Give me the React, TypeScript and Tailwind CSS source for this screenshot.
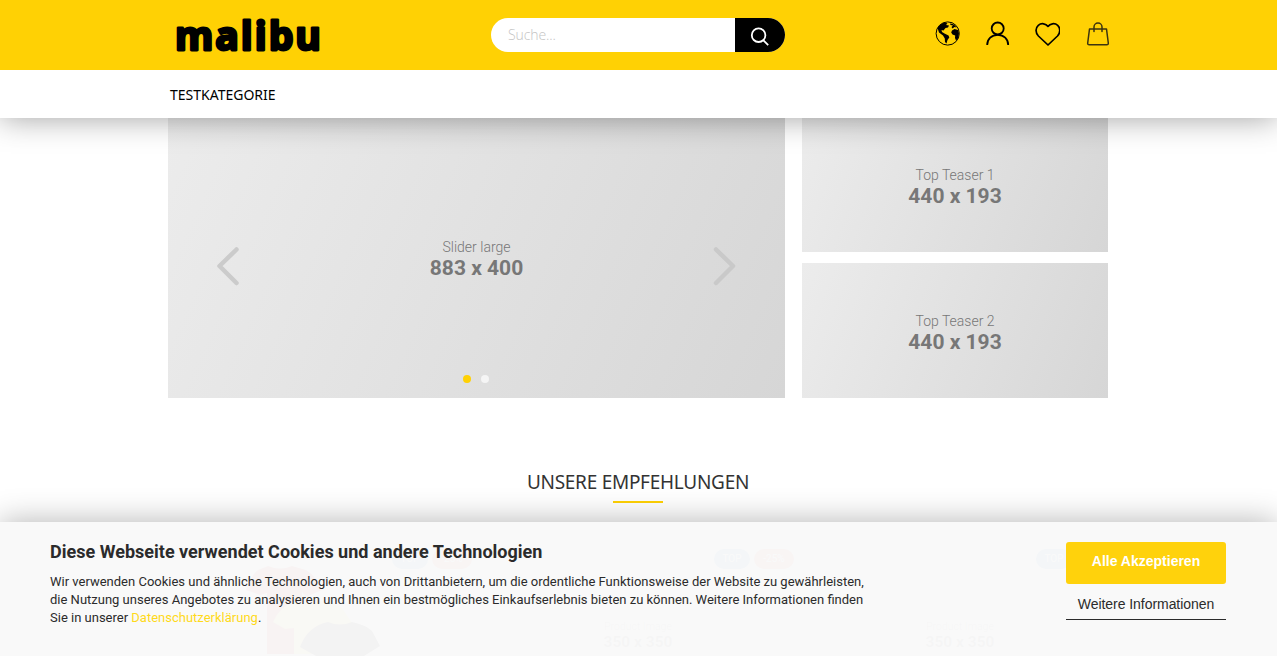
import React from "react";

function Teaser({ title, size, className }: { title: string; size: string; className: string }) {
  return (
    <div className={`flex flex-col items-center justify-center text-[#777] ${className}`}>
      <div className="h-[18px] text-[14px] leading-[18px] font-light">{title}</div>
      <div className="h-[24px] text-[21px] leading-[24px] font-bold">{size}</div>
    </div>
  );
}

function Badges() {
  return (
    <div className="flex justify-end gap-[4px] text-[10px] leading-[20px] text-white">
      <span className="h-[20px] w-[36px] rounded-full bg-[#5b9bd8] text-center">TOP</span>
      <span className="h-[20px] w-[40px] rounded-full bg-[#f8776d] text-center">-25%</span>
    </div>
  );
}

function Shirts() {
  return (
    <svg className="h-[92px] w-[140px]" viewBox="0 0 140 92" aria-hidden="true">
      <path d="M28 0Q40 5 52 0L66 4Q76 10 82 24L66 31 62 26V88H27V27L20 29 6 24Q10 10 18 4Z" fill="#c94f4f" />
      <path d="M56 35Q68 40 80 35 94 36 102 42L112 57 98 62V88H54V62L45 63 33 56Q40 40 56 35Z" fill="#fde47a" />
      <path d="M88 56Q100 61 112 56 126 59 132 65L140 80 124 90V92H76V90L60 81Q68 60 88 56Z" fill="#444" />
    </svg>
  );
}

function Product({ shirts = false }: { shirts?: boolean }) {
  return (
    <div className="w-[312px] shrink-0 pt-[27px]">
      <Badges />
      {shirts ? (
        <div className="-mt-[3px] pl-[80px]"><Shirts /></div>
      ) : (
        <div className="mt-[51px] flex flex-col items-center text-[#888]">
          <div className="text-[10.5px] leading-[14px] font-light">Product Image</div>
          <div className="text-[15.5px] leading-[16px] font-bold">350 x 350</div>
        </div>
      )}
    </div>
  );
}

const arrow = "absolute top-[128px] h-[40px] w-[24px]";

export default function App() {
  return (
    <div className="relative h-[656px] w-full overflow-hidden bg-white font-['Roboto',sans-serif]">
      <header className="relative z-10 bg-white shadow-[0_0_30px_rgba(0,0,0,0.38)]">
        <div className="flex h-[70px] items-center bg-[#ffd104] pl-[168px]">
          <svg className="h-[70px] w-[160px] shrink-0" viewBox="0 0 160 70" role="img" aria-label="malibu">
            <text x="7" y="50" textLength="146" fontFamily="Open Sans" fontWeight="700" fontSize="39" stroke="#000" strokeWidth="2.800" strokeLinejoin="round">malibu</text>
          </svg>
          <div className="ml-[163px] flex h-[34px] w-[294px] overflow-hidden rounded-full bg-white">
            <div className="flex-1 pl-[17px] font-['Open_Sans',sans-serif] text-[14px] leading-[34px] font-light tracking-[-0.1px] text-[#c4c4c4]">Suche...</div>
            <div className="flex w-[50px] items-center justify-center bg-black">
              <svg className="mt-[4px] size-[20px]" viewBox="0 0 20 20" fill="none" stroke="white" strokeWidth="1.8">
                <circle cx="8.6" cy="8.2" r="6.8" />
                <path d="M13.2 13.2l5 5" />
              </svg>
            </div>
          </div>
          <div className="mb-[3px] ml-[150px] flex items-center gap-[25px]">
            <svg className="size-[25px]" viewBox="0 0 25 25">
              <circle cx="12.700" cy="12.500" r="11.600" fill="none" stroke="black" strokeWidth="1" />
              <path d="M2.500 7Q5 2.500 10 1.500L12.500 2.500 11 4 14 4.500 13 6.500 10.500 7 8.500 9.500 6.500 9 7 11 9.500 12.500 13.500 14.500 14.300 16.500 12.500 19 11.500 22.500 10 21 9.800 17.500 8 14.500 4 11.500Z" />
              <path d="M15 2.500Q18 2.500 20 4.500L21.500 6.500 19.500 6 17.500 7.500 16.500 6 18 4.500 15.500 4Z" />
              <path d="M17 9.500L19.500 8 23 9 24 12.500 23 17.500 21 19.500 20 17 20.200 14.500 17.500 13.500 16.200 11.500Z" />
            </svg>
            <svg className="size-[25px]" viewBox="0 0 25 25" fill="none" stroke="black" strokeWidth="1.8">
              <circle cx="12.700" cy="7.5" r="6" />
              <path d="M2.200 24c0-6 4.500-10.200 10.500-10.200S23.200 18 23.200 24" />
            </svg>
            <svg className="size-[25px]" viewBox="0 0 25 25" fill="none" stroke="black" strokeWidth="1.7" strokeLinejoin="round">
              <path d="M13 24L3.400 15C.4 12 .2 7 3.300 4.300 6.500 1.600 10.800 2.600 13 5.400 15.200 2.600 19.500 1.600 22.700 4.300 25.600 7 25.400 12 22.500 15Z" />
            </svg>
            <svg className="size-[25px]" viewBox="0 0 25 25" fill="none" stroke="#3c3410" strokeWidth="1.5" strokeLinejoin="round" strokeLinecap="round">
              <path d="M4.500 8h17l1.800 14q.2 1.800-1.500 1.800h-17.600q-1.700 0-1.500-1.800zM9 10.500V6a4 4 0 0 1 8 0v4.500" />
            </svg>
          </div>
        </div>
        <nav className="flex h-[48px] items-center pl-[170px] font-['Noto_Sans',sans-serif] text-[14px] text-black">TESTKATEGORIE</nav>
      </header>

      <main className="w-[1276px]">
        <div className="flex h-[280px] gap-[17px] pl-[168px]">
          <div className="relative">
            <Teaser title="Slider large" size="883 x 400" className="h-[280px] w-[617px] bg-linear-[114deg,#ececec,#d6d6d6] pt-[2px]" />
            <svg className={`${arrow} left-[48px]`} viewBox="0 0 24 40" fill="none" stroke="#cbcbcb" strokeWidth="4.500" strokeLinecap="round" strokeLinejoin="round"><path d="M20.500 3.500L3.500 20l17 17" /></svg>
            <svg className={`${arrow} left-[545px]`} viewBox="0 0 24 40" fill="none" stroke="#c9c9c9" strokeWidth="4.500" strokeLinecap="round" strokeLinejoin="round"><path d="M3 3.500L20 20 3 37" /></svg>
            <div className="absolute top-[257px] left-[295px] flex gap-[10px]">
              <span className="size-[8px] rounded-full bg-[#ffd104]" />
              <span className="size-[8px] rounded-full bg-[#f5f5f5]" />
            </div>
          </div>
          <div className="flex flex-col gap-[11px]">
            <Teaser title="Top Teaser 1" size="440 x 193" className="h-[134px] w-[306px] bg-linear-[112deg,#ececec,#d6d6d6] pt-[3px]" />
            <Teaser title="Top Teaser 2" size="440 x 193" className="h-[135px] w-[306px] bg-linear-[112deg,#ececec,#d6d6d6] pt-[4px]" />
          </div>
        </div>
        <h2 className="mt-[69px] text-center font-['Noto_Sans',sans-serif] text-[19px] leading-[30px] tracking-[-0.27px] text-[#333]">UNSERE EMPFEHLUNGEN</h2>
        <div className="mx-auto mt-[4px] h-[2px] w-[50px] bg-[#ffd104]" />
        <div className="mt-[19px] flex gap-[10px] pl-[160px]">
          <Product shirts />
          <Product />
          <Product />
        </div>
      </main>

      <aside className="absolute top-[522px] left-0 flex h-[134px] w-full justify-between bg-[#f9f9f9]/97 pt-[20px] pr-[51px] pl-[50px] shadow-[0_0_30px_rgba(0,0,0,0.3)]">
        <div className="text-[#2b2b2b]">
          <h3 className="text-[18px] leading-[20px] font-bold tracking-[0.01px]">Diese Webseite verwendet Cookies und andere Technologien</h3>
          <p className="mt-[11px] text-[13px] leading-[18px] whitespace-nowrap">
            Wir verwenden Cookies und ähnliche Technologien, auch von Drittanbietern, um die ordentliche Funktionsweise der Website zu gewährleisten,<br />
            die Nutzung unseres Angebotes zu analysieren und Ihnen ein bestmögliches Einkaufserlebnis bieten zu können. Weitere Informationen finden<br />
            Sie in unserer <a className="text-[#ffd91a]">Datenschutzerklärung</a>.
          </p>
        </div>
        <div className="w-[160px] text-center font-['Liberation_Sans',sans-serif] text-[14px]">
          <button className="block h-[42px] w-full rounded-[3px] bg-[#ffd104]/97 pb-[4px] font-bold text-white">Alle Akzeptieren</button>
          <button className="mt-[4px] block h-[32px] w-full border-b border-[#2b2b2b] pt-[1px] tracking-[-0.05px] text-[#2b2b2b]">Weitere Informationen</button>
        </div>
      </aside>
    </div>
  );
}
